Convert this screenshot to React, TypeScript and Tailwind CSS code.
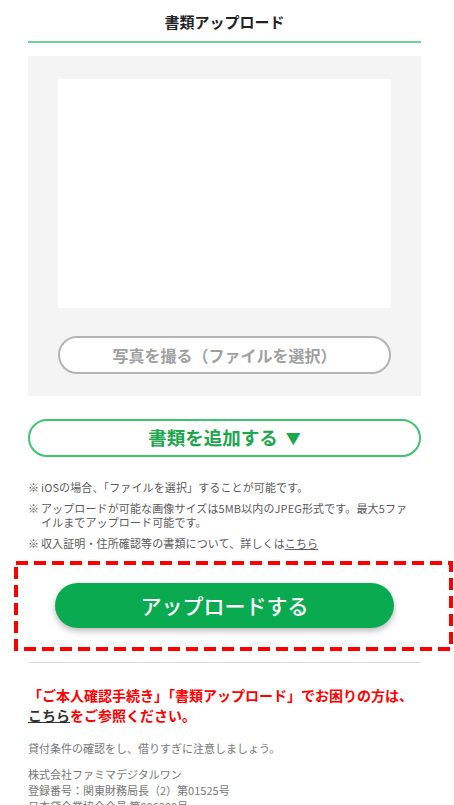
import React from "react";

const notes = [
  ["iOSの場合、「ファイルを選択」することが可能です。"],
  ["アップロードが可能な画像サイズは5MB以内のJPEG形式です。最大5ファ", "イルまでアップロード可能です。"],
];

export default function App() {
  return (
    <div
      className="w-[454px] min-h-[805px] bg-white overflow-hidden"
      style={{ fontFamily: '"Noto Sans CJK JP", "Noto Sans", sans-serif' }}
    >
      {/* 見出し */}
      <div className="ml-[28px] w-[393px]">
        <h1 className="pt-[12px] pb-[9px] text-center text-[15px] leading-[20px] font-bold text-[#222]">
          書類アップロード
        </h1>
        <div className="h-[2px] bg-[#6fd29c]" />
      </div>

      {/* アップロード枠 */}
      <div className="ml-[28px] mt-[13px] w-[393px] bg-[#f4f4f4] px-[30px] pt-[23px] pb-[22px]">
        <div className="h-[229px] bg-white" />
        <button className="mt-[28px] flex h-[38px] w-full items-center justify-center rounded-full border-2 border-[#b4b4b4] bg-white text-[16px] font-bold text-[#a0a0a0]">
          写真を撮る（ファイルを選択）
        </button>
      </div>

      <button className="ml-[28px] mt-[23px] flex h-[38px] w-[393px] items-center justify-center gap-[8px] rounded-full border-2 border-[#3fc36f] bg-white text-[18.5px] font-bold text-[#1ca64d]">
        書類を追加する
        <span className="text-[15px]">▼</span>
      </button>

      {/* 注意書き */}
      <ul className="ml-[28px] mt-[23px] w-[393px] text-[11px] leading-[14px] tracking-[0.12px] text-[#5a5a5a]">
        {notes.map((lines, i) => (
          <li key={i} className="mb-[7px] flex">
            <span className="w-[13px] shrink-0">※</span>
            <span className="whitespace-nowrap">
              {lines.map((l, j) => (
                <span key={j} className="block">
                  {l}
                </span>
              ))}
            </span>
          </li>
        ))}
        <li className="flex">
          <span className="w-[13px] shrink-0">※</span>
          <span>
            収入証明・住所確認等の書類について、詳しくは
            <span className="underline">こちら</span>
          </span>
        </li>
      </ul>

      {/* アップロードボタン（赤枠） */}
      <div className="relative ml-[14px] mt-[11px] h-[90px] w-[439px] pt-[22px]">
        <svg className="pointer-events-none absolute inset-0" width="439" height="90">
          <rect
            x="2"
            y="2"
            width="435"
            height="86"
            fill="none"
            stroke="#ff0000"
            strokeWidth="4"
            strokeDasharray="12 6"
          />
        </svg>
        <button className="ml-[41px] flex h-[45px] w-[339px] items-center justify-center rounded-full bg-[#0aab50] text-[21px] font-medium text-white shadow-[0_3px_6px_rgba(0,0,0,0.28)]">
          アップロードする
        </button>
      </div>

      <div className="ml-[28px] mt-[11px] h-px w-[393px] bg-[#dcdcdc]" />

      {/* フッター */}
      <div className="ml-[28px] w-[393px]">
        <p className="mt-[22px] text-[14px] leading-[20px] font-bold text-[#ff0000]">
          「ご本人確認手続き」「書類アップロード」でお困りの方は、
          <br />
          <span className="text-[#333] underline">こちら</span>をご参照ください。
        </p>
        <p className="mt-[15px] text-[11px] leading-[16px] text-[#777]">
          貸付条件の確認をし、借りすぎに注意しましょう。
        </p>
        <p className="mt-[10px] text-[11px] leading-[16px] text-[#777]">
          株式会社ファミマデジタルワン
          <br />
          登録番号：関東財務局長（2）第01525号
          <br />
          日本貸金業協会会員 第006200号
        </p>
      </div>
    </div>
  );
}
